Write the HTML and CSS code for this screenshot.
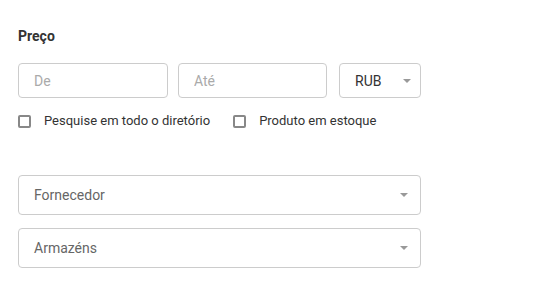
FILE: index.html
```html
<!DOCTYPE html>
<html lang="pt">

<head>
    <meta charset="UTF-8">
    <meta name="viewport" content="width=device-width, initial-scale=1.0">
    <title>Filtros</title>
    <link rel="stylesheet" href="styles.css">
</head>

<body>
    <div class="filters">
        <h3 class="label">Preço</h3>

        <div class="price-row">
            <input type="text" class="field price-from" placeholder="De">
            <input type="text" class="field price-to" placeholder="Até">
            <div class="field select currency">
                <span class="value">RUB</span>
                <span class="caret"></span>
            </div>
        </div>

        <div class="checks">
            <label class="check">
                <span class="box"></span>
                Pesquise em todo o diretório
            </label>
            <label class="check">
                <span class="box"></span>
                Produto em estoque
            </label>
        </div>

        <div class="field select wide">
            <span class="value muted">Fornecedor</span>
            <span class="caret"></span>
        </div>
        <div class="field select wide">
            <span class="value muted">Armazéns</span>
            <span class="caret"></span>
        </div>
    </div>
</body>

</html>
```

FILE: styles.css
```css
body {
    font-family: Roboto, "Liberation Sans", Arial, sans-serif;
    margin: 0;
    padding: 28px 18px 0;
    color: #333;
    background: #fff;
}

.filters {
    width: 403px;
}

.label {
    margin: 0 0 18px;
    font-size: 14px;
    font-weight: 700;
    line-height: 17px;
    color: #333;
}

.price-row {
    display: flex;
    gap: 10px;
}

.field {
    box-sizing: border-box;
    height: 35px;
    border: 1px solid #ccc;
    border-radius: 4px;
    font-family: inherit;
    font-size: 14px;
    color: #333;
    background: #fff;
}

input.field {
    padding: 0 15px;
    outline: none;
}

input.field::placeholder {
    color: #aaa;
}

.price-from {
    width: 150px;
}

.price-to {
    width: 149px;
}

.select {
    display: flex;
    align-items: center;
    justify-content: space-between;
    padding: 0 12px 0 15px;
}

.currency {
    width: 83px;
    margin-left: 2px;
    padding-right: 9px;
}

.caret {
    width: 0;
    height: 0;
    border-left: 4px solid transparent;
    border-right: 4px solid transparent;
    border-top: 4px solid #999;
}

.checks {
    display: flex;
    gap: 23px;
    margin: 15px 0 46px;
}

.check {
    display: flex;
    align-items: center;
    gap: 13px;
    font-size: 13px;
    line-height: 16px;
    color: #333;
}

.box {
    box-sizing: border-box;
    width: 13px;
    height: 13px;
    border: 2px solid #888;
    border-radius: 2px;
}

.wide {
    width: 403px;
    height: 40px;
    margin-bottom: 13px;
}

.muted {
    color: #666;
}
```
